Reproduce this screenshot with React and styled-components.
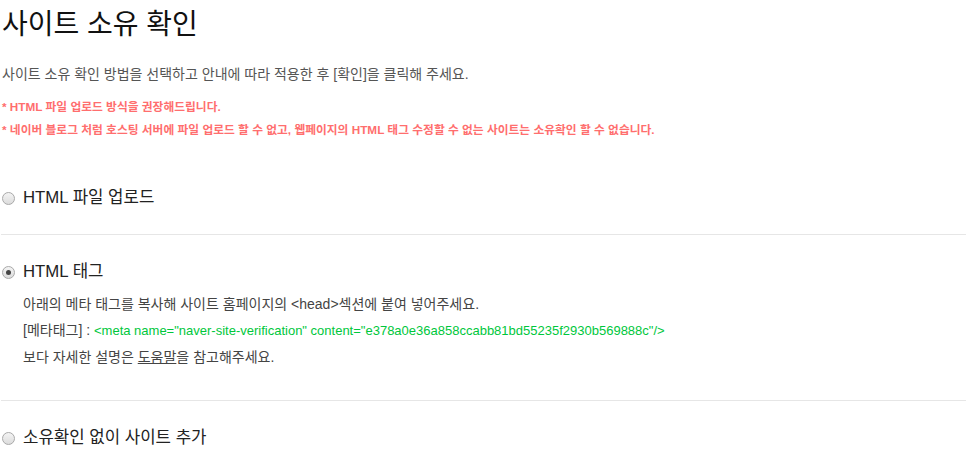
import React from 'react';
import styled, { createGlobalStyle } from 'styled-components';

const GlobalStyle = createGlobalStyle`
  body {
    margin: 0;
    background: #fff;
    font-family: 'Liberation Sans', 'Noto Sans CJK KR', sans-serif;
  }
`;

const Page = styled.div`
  padding: 0 0 0 1px;
`;

const Title = styled.h1`
  margin: 0;
  padding: 9px 0 0 1px;
  font-size: 28px;
  line-height: 32px;
  font-weight: 400;
  color: #111;
`;

const Desc = styled.p`
  margin: 24px 0 0 1px;
  font-size: 14px;
  line-height: 18px;
  color: #555;
`;

const Notes = styled.ul`
  list-style: none;
  margin: 16px 0 0 1px;
  padding: 0;
  display: flex;
  flex-direction: column;
  gap: 8px;
`;

const Note = styled.li`
  font-size: 11.75px;
  line-height: 15px;
  font-weight: 600;
  color: #ff6e6e;
`;

const Option = styled.section`
  padding: ${(p) => p.$pad};
  border-bottom: ${(p) => (p.$last ? 'none' : '1px solid #e6e6e6')};
`;

const RadioRow = styled.label`
  display: flex;
  align-items: center;
  gap: 8px;
  font-size: 16.75px;
  line-height: 20px;
  color: #222;
  cursor: pointer;
`;

const Radio = styled.span`
  position: relative;
  width: 11px;
  height: 11px;
  margin-left: 1px;
  border-radius: 50%;
  border: 1px solid #a9a9a9;
  background: linear-gradient(#f4f4f4, #dcdcdc);
  flex-shrink: 0;
  &::after {
    content: '';
    display: ${(p) => (p.$checked ? 'block' : 'none')};
    position: absolute;
    left: 3px;
    top: 3px;
    width: 5px;
    height: 5px;
    border-radius: 50%;
    background: #444;
  }
`;

const Guide = styled.div`
  margin: 13px 0 0 22px;
  display: flex;
  flex-direction: column;
  gap: 8px;
  font-size: 14px;
  line-height: 18px;
  color: #444;
`;

const Code = styled.span`
  color: #00c73c;
  font-size: 13px;
`;

const HelpLink = styled.a`
  color: #444;
  text-decoration: underline;
`;

const App = () => {
  return (
    <Page>
      <GlobalStyle />
      <Title>사이트 소유 확인</Title>
      <Desc>사이트 소유 확인 방법을 선택하고 안내에 따라 적용한 후 [확인]을 클릭해 주세요.</Desc>
      <Notes>
        <Note>* HTML 파일 업로드 방식을 권장해드립니다.</Note>
        <Note>
          * 네이버 블로그 처럼 호스팅 서버에 파일 업로드 할 수 없고, 웹페이지의 HTML 태그 수정할 수 없는 사이트는 소유확인 할 수 없습니다.
        </Note>
      </Notes>
      <Option $pad='51px 0 26px'>
        <RadioRow>
          <Radio />
          HTML 파일 업로드
        </RadioRow>
      </Option>
      <Option $pad='27px 0 34px'>
        <RadioRow>
          <Radio $checked />
          HTML 태그
        </RadioRow>
        <Guide>
          <div>아래의 메타 태그를 복사해 사이트 홈페이지의 &lt;head&gt;섹션에 붙여 넣어주세요.</div>
          <div>
            [메타태그] :{' '}
            <Code>&lt;meta name="naver-site-verification" content="e378a0e36a858ccabb81bd55235f2930b569888c"/&gt;</Code>
          </div>
          <div>
            보다 자세한 설명은 <HelpLink href='#'>도움말</HelpLink>을 참고해주세요.
          </div>
        </Guide>
      </Option>
      <Option $pad='27px 0 20px' $last>
        <RadioRow>
          <Radio />
          소유확인 없이 사이트 추가
        </RadioRow>
      </Option>
    </Page>
  );
};

export default App;
